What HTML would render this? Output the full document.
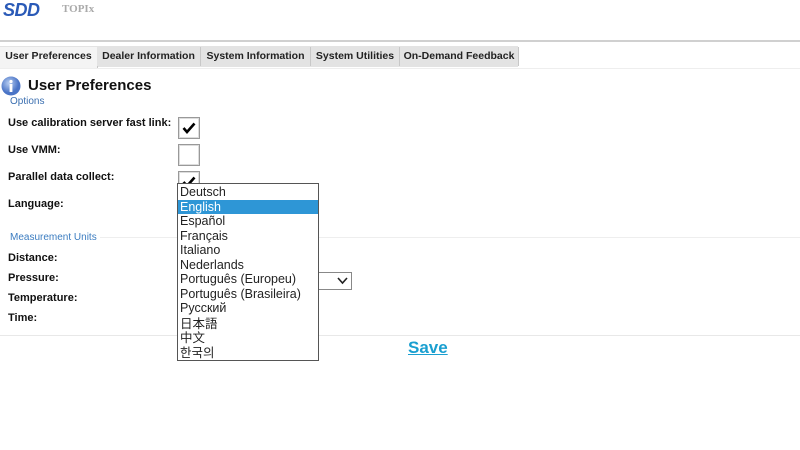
<!DOCTYPE html>
<html><head><style>
body{margin:0;width:800px;height:450px;background:#fff;font-family:"Liberation Sans",Arial,sans-serif;position:relative;overflow:hidden}
.a{position:absolute}
.lbl{position:absolute;left:8px;font-size:11px;font-weight:bold;color:#111}
.tab{position:absolute;top:47px;height:19px;font-size:10.5px;font-weight:bold;line-height:19px;text-align:center;background:#e3e3e3;border-right:1px solid #c8c8c8;color:#222}
.cb{position:absolute;left:178px;width:20px;height:20px;border:1px solid #999;background:#fff;box-shadow:inset 0 0 0 1px #ddd}
.dd div{height:14.5px;line-height:14.5px;padding-left:2px;font-size:12.5px;color:#222}
</style></head><body>
<div class="a" style="left:3px;top:0px;font-size:18px;font-weight:bold;font-style:italic;color:#2a5ab7;letter-spacing:-0.5px">SDD</div>
<div class="a" style="left:62px;top:3px;font-size:11px;color:#aaa;font-family:'Liberation Serif',serif;font-weight:bold">TOPIx</div>
<div class="a" style="left:0;top:40px;width:800px;height:2px;background:#d0d0d0"></div>
<div class="a" style="left:0;top:46px;width:518px;height:21px;background:#e3e3e3"></div>
<div class="tab" style="left:0;width:97px;background:#f4f4f4;height:22px">User Preferences</div>
<div class="tab" style="left:97px;width:103px">Dealer Information</div>
<div class="tab" style="left:201px;width:109px">System Information</div>
<div class="tab" style="left:311px;width:88px">System Utilities</div>
<div class="tab" style="left:400px;width:118px">On-Demand Feedback</div>
<div class="a" style="left:0;top:68px;width:800px;height:1px;background:#eee"></div>
<svg class="a" style="left:1px;top:76px" width="20" height="20"><defs><radialGradient id="g" cx="40%" cy="35%"><stop offset="0" stop-color="#b9cff2"/><stop offset="1" stop-color="#4a74c6"/></radialGradient></defs><circle cx="10" cy="10" r="9.5" fill="url(#g)"/><circle cx="10" cy="5.5" r="1.6" fill="#fff"/><rect x="8.6" y="8" width="2.8" height="8" fill="#fff"/></svg>
<div class="a" style="left:28px;top:77px;font-size:15px;font-weight:bold;color:#111">User Preferences</div>
<div class="a" style="left:10px;top:96px;font-size:10px;color:#3b6fb0">Options</div>
<div class="lbl" style="top:117px">Use calibration server fast link:</div>
<div class="lbl" style="top:144px">Use VMM:</div>
<div class="lbl" style="top:171px">Parallel data collect:</div>
<div class="lbl" style="top:198px">Language:</div>
<div class="cb" style="top:117px"><svg class="a" style="left:3px;top:4px" width="14" height="12"><path d="M1.5 6L5 10L12.5 1.5" stroke="#000" stroke-width="2.6" fill="none"/></svg></div>
<div class="cb" style="top:144px"></div>
<div class="cb" style="top:171px"><svg class="a" style="left:3px;top:4px" width="14" height="12"><path d="M1.5 6L5 10L12.5 1.5" stroke="#000" stroke-width="2.6" fill="none"/></svg></div>
<div class="a" style="left:100px;top:237px;width:700px;height:1px;background:#eee"></div>
<div class="a" style="left:10px;top:232px;font-size:10px;color:#3b7cc0">Measurement Units</div>
<div class="lbl" style="top:252px">Distance:</div>
<div class="lbl" style="top:272px">Pressure:</div>
<div class="lbl" style="top:292px">Temperature:</div>
<div class="lbl" style="top:312px">Time:</div>
<div class="a" style="left:200px;top:272px;width:150px;height:16px;border:1px solid #888;background:#fff"><svg class="a" style="right:3px;top:4px" width="11" height="8"><path d="M1 1L5.5 6L10 1" stroke="#222" stroke-width="1.6" fill="none"/></svg></div>
<div class="a" style="left:0;top:335px;width:800px;height:1px;background:#e8e8e8"></div>
<div class="a dd" style="left:177px;top:183px;width:140px;height:175px;border:1px solid #555;background:#fff;padding-top:1px">
<div>Deutsch</div><div style="background:#2e96d6;color:#fff">English</div><div>Español</div><div>Français</div><div>Italiano</div><div>Nederlands</div><div>Português (Europeu)</div><div>Português (Brasileira)</div><div>Русский</div><div style="font-family:'Noto Sans CJK JP',sans-serif">日本語</div><div style="font-family:'Noto Sans CJK SC',sans-serif">中文</div><div style="font-family:'Noto Sans CJK KR',sans-serif">한국의</div></div>
<div class="a" style="left:408px;top:338px;font-size:17px;font-weight:bold;color:#1a9fd0;text-decoration:underline">Save</div>
</body></html>
